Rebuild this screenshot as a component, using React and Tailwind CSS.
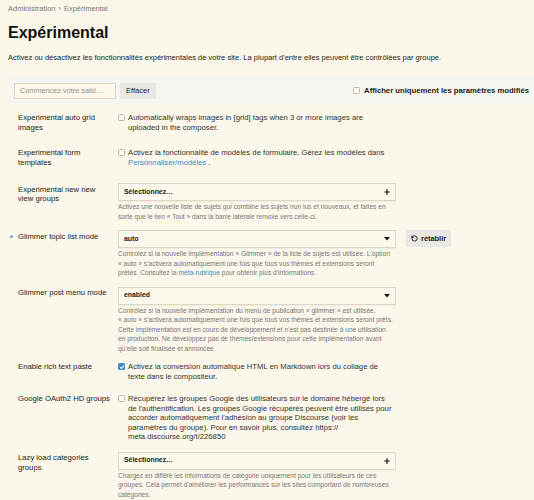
import React from "react";

function Box({ checked }) {
  if (checked) {
    return (
      <span className="mt-[1.25px] flex h-[7px] w-[7px] shrink-0 items-center justify-center rounded-[1.5px] bg-[#3c8ccf]">
        <svg viewBox="0 0 10 10" className="h-[6px] w-[6px]">
          <path d="M2 5.3l2.1 2.1L8.2 2.9" stroke="white" strokeWidth="1.9" fill="none" />
        </svg>
      </span>
    );
  }
  return <span className="mt-[1.25px] h-[7px] w-[7px] shrink-0 rounded-[1.5px] border border-[#bdb9ae] bg-[#fefdf8]" />;
}

function Lines({ lines, className = "" }) {
  return (
    <div className={className}>
      {lines.map((l, i) => (
        <div key={i} className="whitespace-nowrap">
          {l}
        </div>
      ))}
    </div>
  );
}

function Label({ lines, dot }) {
  return (
    <div className="relative w-[100px] shrink-0 pr-[4px] text-[7.7px] leading-[9.5px] text-[#222]">
      {dot && <span className="absolute left-[-8px] top-[3.5px] h-[3px] w-[3px] rounded-full bg-[#7fa9c6]" />}
      <Lines lines={lines} />
    </div>
  );
}

function CheckRow({ label, lines, checked, mt }) {
  return (
    <div className={`flex pl-[10px] ${mt}`}>
      <Label lines={label} />
      <div className="flex w-[278px] gap-[3px]">
        <Box checked={checked} />
        <Lines lines={lines} className="text-[7.7px] leading-[9.5px] text-[#333]" />
      </div>
    </div>
  );
}

function Plus() {
  return (
    <svg viewBox="0 0 10 10" className="h-[6px] w-[6px]">
      <path d="M5 0.5v9M0.5 5h9" stroke="#111" strokeWidth="2" />
    </svg>
  );
}

function Caret() {
  return (
    <svg viewBox="0 0 10 6" className="h-[3.5px] w-[6px]">
      <path d="M0 0h10L5 6z" fill="#111" />
    </svg>
  );
}

function SelectRow({ label, value, icon, desc, mt, dot, reset }) {
  return (
    <div className={`flex pl-[10px] ${mt}`}>
      <div className="pt-[1.5px]">
        <Label lines={label} dot={dot} />
      </div>
      <div className="w-[278px] shrink-0">
        <div className="flex h-[18px] items-center justify-between border border-[#ddd8c6] bg-[#fcf8ec] pl-[5px] pr-[5px] text-[6.9px] font-bold text-[#1a1a1a] shadow-[0_1px_1px_rgba(0,0,0,0.04)]">
          <span>{value}</span>
          {icon === "plus" ? <Plus /> : <Caret />}
        </div>
        <Lines lines={desc} className="mt-[1px] text-[6.65px] leading-[9.5px] text-[#777]" />
      </div>
      {reset && (
        <div className="ml-[10px] flex h-[17px] items-center gap-[3px] bg-[#e9e8e4] px-[5px] text-[7.4px] font-bold text-[#222]">
          <svg viewBox="0 0 24 24" className="h-[7px] w-[7px]" fill="none" stroke="#222" strokeWidth="3.2" strokeLinecap="round" strokeLinejoin="round">
            <path d="M3 12a9 9 0 1 0 9-9 9.75 9.75 0 0 0-6.74 2.74L3 8" />
            <path d="M3 3v5h5" />
          </svg>
          <span>rétablir</span>
        </div>
      )}
    </div>
  );
}

const Link = ({ children }) => <span className="text-[#3391c4]">{children}</span>;

export default function App() {
  return (
    <div className="min-h-screen bg-[#fbf7ea] pl-[8px] font-['Liberation_Sans',Arial,sans-serif] text-[#222]">
      <div className="flex items-center gap-[3px] pt-[4px] text-[7.5px] leading-[10px] text-[#777]">
        <span>Administration</span>
        <span className="text-[7px]">›</span>
        <span>Expérimental</span>
      </div>
      <h1 className="mt-[9px] text-[16px] font-bold leading-[20px] text-[#111]">Expérimental</h1>
      <p className="mt-[9.5px] text-[7.55px] leading-[10px] text-[#222]">
        Activez ou désactivez les fonctionnalités expérimentales de votre site. La plupart d'entre elles peuvent être contrôlées par groupe.
      </p>
      <div className="ml-[1px] mt-[14.5px] flex h-[28px] items-center justify-between bg-[#f6f5ef] pl-[5px] pr-[5px]">
        <div className="flex items-center gap-[4px]">
          <div className="flex h-[16px] w-[102px] items-center border border-[#ddd6c2] bg-[#fcf8ec] pl-[5px] text-[7.3px] text-[#949088]">
            Commencez votre saisi…
          </div>
          <div className="flex h-[16px] items-center bg-[#e9e8e4] px-[6px] text-[7.5px] text-[#222]">Effacer</div>
        </div>
        <div className="flex items-center gap-[4px] text-[7.7px] font-bold text-[#222]">
          <span className="h-[7px] w-[7px] rounded-[1.5px] border border-[#bdb9ae] bg-[#fefdf8]" />
          <span>Afficher uniquement les paramètres modifiés</span>
        </div>
      </div>

      <CheckRow
        mt="mt-[8px]"
        label={["Experimental auto grid", "images"]}
        lines={["Automatically wraps images in [grid] tags when 3 or more images are", "uploaded in the composer."]}
      />
      <CheckRow
        mt="mt-[16px]"
        label={["Experimental form", "templates"]}
        lines={[
          "Activez la fonctionnalité de modèles de formulaire. Gérez les modèles dans",
          <span>
            <Link>Personnaliser/modèles</Link> .
          </span>,
        ]}
      />
      <SelectRow
        mt="mt-[16px]"
        label={["Experimental new new", "view groups"]}
        value="Sélectionnez…"
        icon="plus"
        desc={[
          "Activez une nouvelle liste de sujets qui combine les sujets non lus et nouveaux, et faites en",
          "sorte que le lien « Tout » dans la barre latérale renvoie vers celle-ci.",
        ]}
      />
      <SelectRow
        mt="mt-[9px]"
        dot
        reset
        label={["Glimmer topic list mode"]}
        value="auto"
        icon="caret"
        desc={[
          "Contrôlez si la nouvelle implémentation « Glimmer » de la liste de sujets est utilisée. L'option",
          "« auto » s'activera automatiquement une fois que tous vos thèmes et extensions seront",
          <span>
            prêtes. Consultez la <Link>méta-rubrique</Link> pour obtenir plus d'informations.
          </span>,
        ]}
      />
      <SelectRow
        mt="mt-[9px]"
        label={["Glimmer post menu mode"]}
        value="enabled"
        icon="caret"
        desc={[
          "Contrôlez si la nouvelle implémentation du menu de publication « glimmer » est utilisée.",
          "« auto » s'activera automatiquement une fois que tous vos thèmes et extensions seront prêts.",
          "Cette implémentation est en cours de développement et n'est pas destinée à une utilisation",
          "en production. Ne développez pas de thèmes/extensions pour cette implémentation avant",
          "qu'elle soit finalisée et annoncée.",
        ]}
      />
      <CheckRow
        mt="mt-[9px]"
        checked
        label={["Enable rich text paste"]}
        lines={["Activez la conversion automatique HTML en Markdown lors du collage de", "texte dans le compositeur."]}
      />
      <CheckRow
        mt="mt-[13px]"
        label={["Google OAuth2 HD groups"]}
        lines={[
          "Récupérez les groupes Google des utilisateurs sur le domaine hébergé lors",
          "de l'authentification. Les groupes Google récupérés peuvent être utilisés pour",
          "accorder automatiquement l'adhésion au groupe Discourse (voir les",
          "paramètres du groupe). Pour en savoir plus, consultez https://",
          "meta.discourse.org/t/226850",
        ]}
      />
      <SelectRow
        mt="mt-[10px]"
        label={["Lazy load categories", "groups"]}
        value="Sélectionnez…"
        icon="plus"
        desc={[
          "Chargez en différé les informations de catégorie uniquement pour les utilisateurs de ces",
          "groupes. Cela permet d'améliorer les performances sur les sites comportant de nombreuses",
          "catégories.",
        ]}
      />
    </div>
  );
}
